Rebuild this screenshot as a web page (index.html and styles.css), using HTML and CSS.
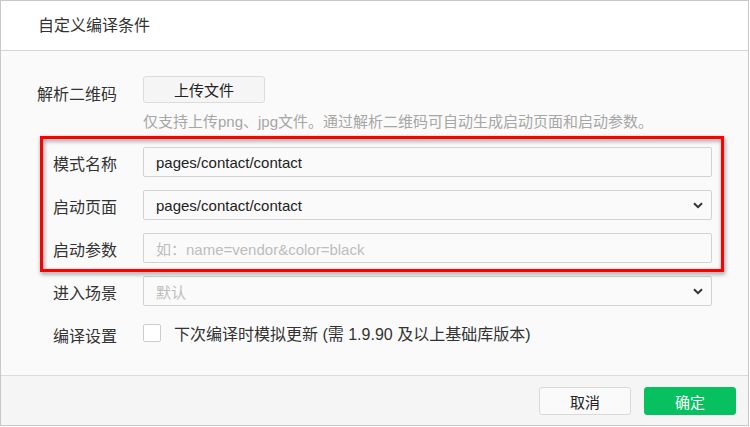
FILE: index.html
```html
<!DOCTYPE html>
<html lang="zh-CN">
<head>
<meta charset="utf-8">
<title>自定义编译条件</title>
<link rel="stylesheet" href="styles.css">
</head>
<body>
<div class="dialog">
  <div class="header">自定义编译条件</div>
  <div class="body">
    <div class="row row-upload">
      <div class="label">解析二维码</div>
      <button class="btn-upload">上传文件</button>
    </div>
    <div class="hint">仅支持上传png、jpg文件。通过解析二维码可自动生成启动页面和启动参数。</div>
    <div class="fields">
      <div class="row">
        <div class="label">模式名称</div>
        <div class="field"><span class="value">pages/contact/contact</span></div>
      </div>
      <div class="row">
        <div class="label">启动页面</div>
        <div class="field select"><span class="value">pages/contact/contact</span>
          <svg class="chev" width="10" height="7" viewBox="0 0 10 7"><path d="M1 1.2 L5 5.2 L9 1.2" fill="none" stroke="#333" stroke-width="2"/></svg>
        </div>
      </div>
      <div class="row">
        <div class="label">启动参数</div>
        <div class="field"><span class="placeholder">如：name=vendor&amp;color=black</span></div>
      </div>
      <div class="row">
        <div class="label">进入场景</div>
        <div class="field select"><span class="placeholder">默认</span>
          <svg class="chev" width="10" height="7" viewBox="0 0 10 7"><path d="M1 1.2 L5 5.2 L9 1.2" fill="none" stroke="#333" stroke-width="2"/></svg>
        </div>
      </div>
    </div>
    <div class="row row-check">
      <div class="label">编译设置</div>
      <span class="checkbox"></span>
      <span class="check-text">下次编译时模拟更新 (需 1.9.90 及以上基础库版本)</span>
    </div>
  </div>
  <div class="footer">
    <button class="btn btn-cancel">取消</button>
    <button class="btn btn-ok">确定</button>
  </div>
  <div class="annotation"></div>
</div>
</body>
</html>
```

FILE: styles.css
```css
html, body {
  margin: 0;
  padding: 0;
  background: #ffffff;
}
body {
  font-family: "Liberation Sans", "Noto Sans CJK SC", sans-serif;
  color: #333333;
}
.dialog {
  position: relative;
  width: 749px;
  height: 426px;
  box-sizing: border-box;
  border: 1px solid #c8c8c8;
  display: flex;
  flex-direction: column;
  background: #fafafa;
}
.header {
  height: 49px;
  line-height: 49px;
  padding-left: 37px;
  font-size: 16px;
  background: #ffffff;
  border-bottom: 1px solid #d6d6d6;
  color: #333;
}
.body {
  flex: 1;
  padding: 25px 36px 0 16px;
}
.row {
  display: flex;
  align-items: center;
}
.label {
  width: 126px;
  box-sizing: border-box;
  padding-right: 26px;
  text-align: right;
  flex: none;
  font-size: 16px;
  line-height: 22px;
  padding-top: 5px;
  color: #333;
  white-space: nowrap;
}
.row-upload {
  align-items: flex-start;
}
.row-upload .label {
  padding-top: 8px;
}
.btn-upload {
  width: 122px;
  height: 27px;
  box-sizing: border-box;
  border: 1px solid #dcdcdc;
  border-radius: 3px;
  background: #f5f5f5;
  font-family: inherit;
  font-size: 15px;
  color: #222;
  padding: 0;
}
.hint {
  margin: 6px 0 0 126px;
  font-size: 15px;
  line-height: 20px;
  color: #a6a6a6;
  white-space: nowrap;
}
.fields {
  margin-top: 15px;
  display: flex;
  flex-direction: column;
  gap: 13px;
}
.field {
  flex: 1;
  height: 30px;
  box-sizing: border-box;
  border: 1px solid #d3d3d3;
  border-radius: 2px;
  background: #fafafa;
  display: flex;
  align-items: center;
  padding: 0 8px 0 12px;
  font-size: 15px;
}
.value {
  color: #222;
  flex: 1;
}
.placeholder {
  color: #bdbdbd;
  flex: 1;
}
.chev {
  flex: none;
  margin-top: 1px;
}
.row-check {
  margin-top: 12px;
}
.row-check .label {
  padding-top: 8px;
}
.checkbox {
  width: 18px;
  height: 18px;
  box-sizing: border-box;
  border: 1px solid #cccccc;
  border-radius: 2px;
  background: #ffffff;
  flex: none;
}
.check-text {
  margin-left: 13px;
  font-size: 16px;
  color: #333;
  white-space: nowrap;
}
.footer {
  height: 50px;
  box-sizing: border-box;
  border-top: 1px solid #dcdcdc;
  background: #f5f5f5;
  display: flex;
  justify-content: flex-end;
  align-items: flex-start;
  gap: 13px;
  padding: 11px 12px 0 0;
}
.btn {
  width: 92px;
  height: 28px;
  box-sizing: border-box;
  border-radius: 3px;
  font-family: inherit;
  font-size: 15px;
  padding: 0;
}
.btn-cancel {
  background: #fafafa;
  border: 1px solid #d9d9d9;
  color: #222;
}
.btn-ok {
  background: #07c160;
  border: 1px solid #07c160;
  color: #ffffff;
}
.annotation {
  position: absolute;
  left: 39px;
  top: 135px;
  width: 684px;
  height: 136px;
  box-sizing: border-box;
  border: 3px solid #ff0000;
  filter: drop-shadow(1px 2px 2px rgba(0, 0, 0, 0.45));
  pointer-events: none;
}
```
